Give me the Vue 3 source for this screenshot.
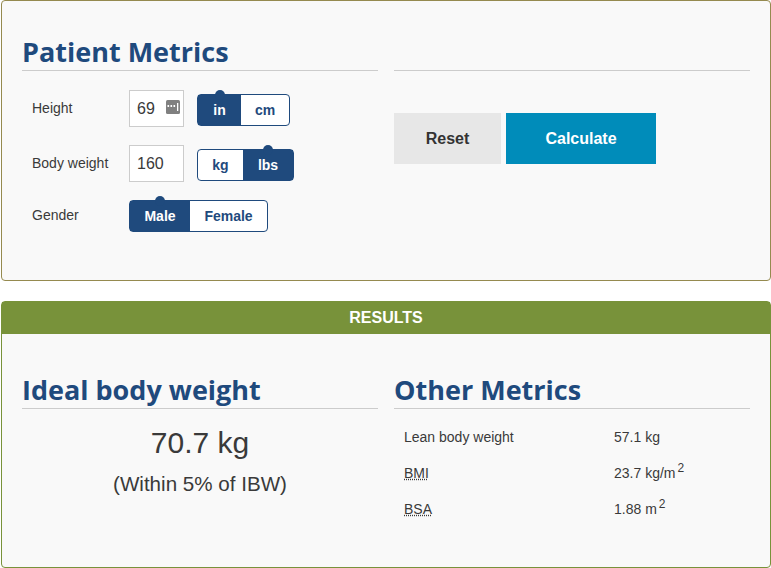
<script setup>
const rows = [
  { label: 'Lean body weight', value: '57.1 kg', abbr: false, sup: false },
  { label: 'BMI', value: '23.7 kg/m', abbr: true, sup: true },
  { label: 'BSA', value: '1.88 m', abbr: true, sup: true },
]
</script>

<template>
  <div class="page">
    <section class="card metrics">
      <div class="cols">
        <div>
          <h2 class="title">Patient Metrics</h2>
          <div class="form">
            <div class="row">
              <span class="label">Height</span>
              <div class="input"><span>69</span>
                <svg class="ruler" width="14" height="14" viewBox="0 0 14 14">
                  <rect width="14" height="14" rx="1.5" fill="#808080" />
                  <path d="M1.5 5h1.6v2H1.5zM4.5 5h1.6v2H4.5zM7.5 5h1.6v2H7.5z" fill="#fff" />
                  <rect x="11" y="3" width="1.3" height="8" fill="#fff" />
                </svg>
              </div>
              <div class="toggle offset">
                <span class="seg on w44">in</span>
                <span class="seg w49">cm</span>
              </div>
            </div>
            <div class="row">
              <span class="label">Body weight</span>
              <div class="input"><span>160</span></div>
              <div class="toggle offset">
                <span class="seg w46">kg</span>
                <span class="seg on w51">lbs</span>
              </div>
            </div>
            <div class="row">
              <span class="label short">Gender</span>
              <div class="toggle">
                <span class="seg on w61">Male</span>
                <span class="seg w78">Female</span>
              </div>
            </div>
          </div>
        </div>
        <div>
          <div class="title"></div>
          <div class="actions">
            <button class="btn reset">Reset</button>
            <button class="btn calc">Calculate</button>
          </div>
        </div>
      </div>
    </section>

    <section class="card results">
      <header class="bar">RESULTS</header>
      <div class="cols">
        <div>
          <h2 class="title">Ideal body weight</h2>
          <div class="ibw">
            <div class="big">70.7 kg</div>
            <div class="note">(Within 5% of IBW)</div>
          </div>
        </div>
        <div>
          <h2 class="title">Other Metrics</h2>
          <div class="list">
            <div v-for="r in rows" :key="r.label" class="item">
              <span class="name"><abbr v-if="r.abbr">{{ r.label }}</abbr><template v-else>{{ r.label }}</template></span>
              <span class="val">{{ r.value }}<sup v-if="r.sup">2</sup></span>
            </div>
          </div>
        </div>
      </div>
    </section>
  </div>
</template>

<style>
html, body { margin: 0; background: #fff; }
</style>

<style scoped>
.page {
  width: 770px;
  margin-left: 1px;
  font-family: "Liberation Sans", Arial, sans-serif;
  color: #3a3a3a;
  box-sizing: border-box;
}
.card {
  background: #f9f9f9;
  box-sizing: border-box;
  border: 1px solid #958a4f;
  border-radius: 4px;
}
.metrics { height: 281px; }
.results {
  height: 267px;
  margin-top: 20px;
  border-color: #78923a;
}
.bar {
  height: 32px;
  background: #78923a;
  color: #fff;
  font-weight: 700;
  font-size: 16px;
  line-height: 31px;
  text-align: center;
}
.cols {
  display: grid;
  grid-template-columns: 356px 356px;
  gap: 16px;
  padding: 0 20px;
}
.metrics .cols { padding-top: 32px; }
.results .cols { padding-top: 37px; }
.title {
  margin: 0;
  height: 38px;
  box-sizing: border-box;
  border-bottom: 1px solid #ccc;
  font-family: "Open Sans", sans-serif;
  font-weight: 700;
  font-size: 27px;
  line-height: 38px;
  color: #1f4a7d;
  white-space: nowrap;
}
.form {
  display: flex;
  flex-direction: column;
  gap: 18px;
  padding-top: 19px;
}
.row {
  display: flex;
  align-items: flex-start;
}
.label {
  width: 107px;
  padding-left: 10px;
  box-sizing: border-box;
  font-size: 14px;
  line-height: 36px;
}
.label.short { line-height: 30px; }
.input {
  width: 55px;
  height: 37px;
  box-sizing: border-box;
  border: 1px solid #ccc;
  background: #fff;
  display: flex;
  align-items: center;
  justify-content: space-between;
  padding: 0 3px 0 7px;
  font-size: 16px;
  margin-right: 13px;
}
.ruler { margin-top: -3px; }
.toggle {
  display: flex;
  height: 32px;
  box-sizing: border-box;
  border: 1px solid #1f4a7d;
  border-radius: 4px;
  background: #fff;
}
.offset { margin-top: 4px; }
.seg {
  position: relative;
  box-sizing: border-box;
  display: flex;
  align-items: center;
  justify-content: center;
  color: #1f4a7d;
  font-size: 14px;
  font-weight: 700;
}
.seg.on {
  background: #1f4a7d;
  color: #fff;
}
.seg.on::before {
  content: "";
  position: absolute;
  top: -5px;
  left: 50%;
  width: 10px;
  height: 10px;
  margin-left: -5px;
  border-radius: 50%;
  background: #1f4a7d;
}
.w44 { width: 43px; }
.w49 { width: 48px; }
.w46 { width: 45px; }
.w51 { width: 50px; }
.w61 { width: 60px; }
.w78 { width: 77px; }
.actions {
  display: flex;
  gap: 5px;
  padding-top: 42px;
}
.btn {
  height: 51px;
  border: 0;
  padding: 0;
  font-family: inherit;
  font-size: 16px;
  font-weight: 700;
}
.reset {
  width: 107px;
  background: #e7e7e7;
  color: #333;
}
.calc {
  width: 150px;
  background: #008cba;
  color: #fff;
}
.ibw {
  text-align: center;
  padding-top: 16px;
}
.big {
  font-size: 30px;
  line-height: 36px;
}
.note {
  font-size: 20.6px;
  line-height: 24px;
  margin-top: 11px;
}
.list {
  padding-top: 10px;
  font-size: 14px;
}
.item {
  display: flex;
  height: 36px;
  align-items: center;
  padding-left: 10px;
}
.name { width: 210px; }
abbr {
  text-decoration: underline dotted;
  text-underline-offset: 1px;
}
sup {
  font-size: 12px;
  line-height: 0;
  margin-left: 2px;
  vertical-align: 6px;
}
</style>
